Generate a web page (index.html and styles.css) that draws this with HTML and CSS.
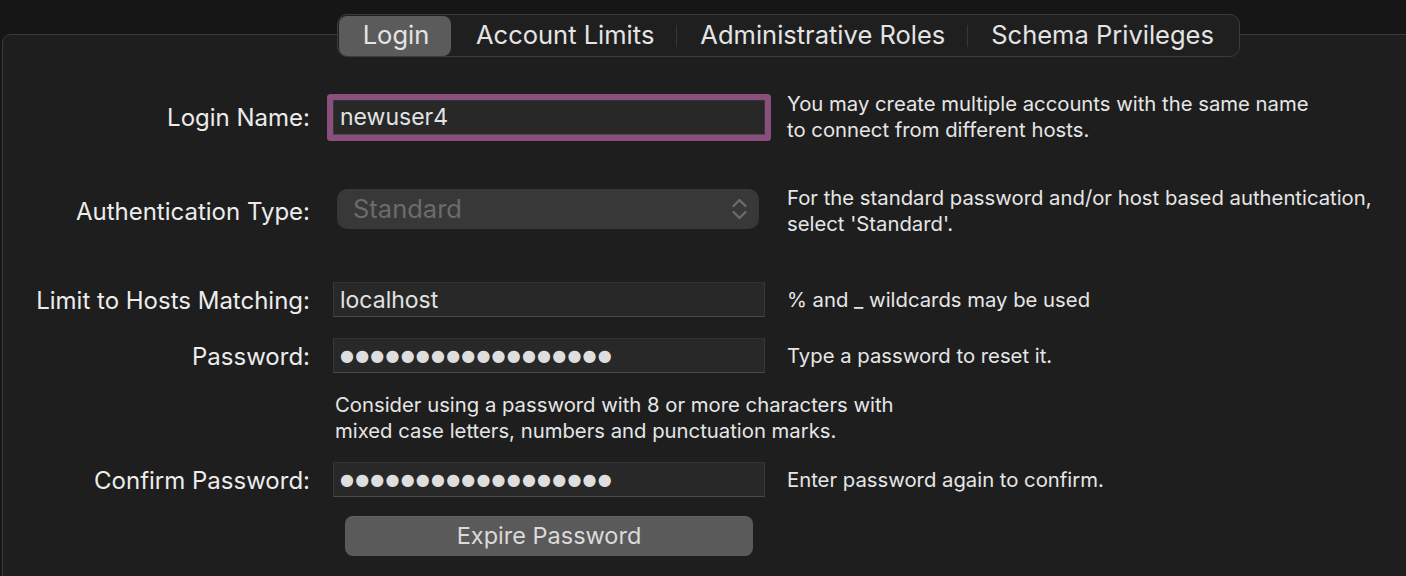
FILE: index.html
```html
<!DOCTYPE html>
<html>
<head>
<meta charset="utf-8">
<link rel="stylesheet" href="styles.css">
</head>
<body>
<div class="window">
  <div class="panel">
    <div class="tabs">
      <div class="tab selected">Login</div>
      <div class="tab">Account Limits</div>
      <div class="sep"></div>
      <div class="tab">Administrative Roles</div>
      <div class="sep"></div>
      <div class="tab">Schema Privileges</div>
    </div>

    <div class="row row1">
      <div class="label">Login Name:</div>
      <div class="field focus"><span class="val">newuser4</span></div>
      <div class="desc">You may create multiple accounts with the same name<br>to connect from different hosts.</div>
    </div>

    <div class="row row2">
      <div class="label">Authentication Type:</div>
      <div class="popup">
        <span class="popup-text">Standard</span>
        <svg class="chev" width="17" height="26" viewBox="0 0 17 26"><path d="M2.5 10 L8.5 4 L14.5 10 M2.5 16 L8.5 22 L14.5 16" fill="none" stroke="#6a6a6a" stroke-width="2.4" stroke-linecap="round" stroke-linejoin="round"/></svg>
      </div>
      <div class="desc">For the standard password and/or host based authentication,<br>select 'Standard'.</div>
    </div>

    <div class="row row3">
      <div class="label">Limit to Hosts Matching:</div>
      <div class="field"><span class="val">localhost</span></div>
      <div class="desc">% and _ wildcards may be used</div>
    </div>

    <div class="row row4">
      <div class="label">Password:</div>
      <div class="field"><span class="dots">●●●●●●●●●●●●●●●●●●</span></div>
      <div class="desc">Type a password to reset it.</div>
    </div>

    <div class="row row5">
      <div class="label"></div>
      <div class="hint">Consider using a password with 8 or more characters with<br>mixed case letters, numbers and punctuation marks.</div>
    </div>

    <div class="row row6">
      <div class="label">Confirm Password:</div>
      <div class="field"><span class="dots">●●●●●●●●●●●●●●●●●●</span></div>
      <div class="desc">Enter password again to confirm.</div>
    </div>

    <div class="row row7">
      <div class="label"></div>
      <div class="button">Expire Password</div>
    </div>
  </div>
</div>
</body>
</html>
```

FILE: styles.css
```css
html, body {
  margin: 0;
  padding: 0;
  background: #161616;
  overflow: hidden;
  width: 1406px;
  height: 576px;
}
body {
  font-family: Inter, "Liberation Sans", sans-serif;
  color: #e6e6e6;
}
.window {
  padding-top: 34px;
}
.panel {
  margin-left: 2px;
  width: 1440px;
  height: 560px;
  background: #1e1e1e;
  border: 1px solid #3a3a3a;
  border-radius: 9px;
  box-sizing: border-box;
}
.tabs {
  margin-top: -21px;
  margin-left: 334px;
  width: 903px;
  height: 43px;
  box-sizing: border-box;
  border: 1px solid #3c3c3c;
  border-radius: 10px;
  background: #1f1f1f;
  display: flex;
  align-items: center;
  padding: 0 1px;
}
.tab {
  flex: none;
  white-space: nowrap;
  font-size: 25.5px;
  color: #e4e4e4;
  padding: 0 22px 0 23px;
  line-height: 39px;
  height: 41px;
  box-sizing: border-box;
}
.tab.selected {
  background: #5b5b5b;
  border-radius: 8px;
  width: 112px;
  height: 40px;
  line-height: 38px;
  text-align: center;
  padding: 0 0 0 2px;
  margin-right: 2px;
}
.sep {
  flex: none;
  width: 1px;
  height: 22px;
  background: #363636;
}
.row {
  display: flex;
  align-items: center;
}
.label {
  width: 307px;
  flex: none;
  text-align: right;
  font-size: 24px;
  color: #ececec;
  margin-right: 23px;
  white-space: nowrap;
  padding-top: 1px;
}
.field {
  width: 432px;
  height: 35px;
  flex: none;
  box-sizing: border-box;
  background: #282828;
  border-top: 1px solid #333;
  border-bottom: 1px solid #4a4a4a;
  border-left: 1px solid #383838;
  border-right: 1px solid #383838;
  display: flex;
  align-items: center;
  padding-left: 6px;
  font-size: 23px;
  color: #e2e2e2;
}
.field.focus {
  box-shadow: 0 0 0 6px #8a4f7c;
  border-radius: 1px;
}
.desc {
  margin-left: 22px;
  font-size: 20.3px;
  line-height: 26px;
  color: #e6e6e6;
  white-space: nowrap;
}
.row1 { margin-top: 34px; height: 52px; }
.row2 { margin-top: 42px; height: 52px; }
.row3 { margin-top: 45px; height: 35px; }
.row4 { margin-top: 21px; height: 35px; }
.row5 { margin-top: 19px; height: 52px; }
.row6 { margin-top: 18px; height: 35px; }
.row7 { margin-top: 19px; height: 40px; }

.popup {
  width: 422px;
  height: 40px;
  flex: none;
  margin-left: 4px;
  margin-right: 6px;
  margin-bottom: 4px;
  box-sizing: border-box;
  background: #383838;
  border-radius: 10px;
  display: flex;
  align-items: center;
  justify-content: space-between;
  padding: 0 11px 0 16px;
}
.popup-text {
  font-size: 25.5px;
  line-height: 36px;
  color: #6b6b6b;
}
.dots {
  font-family: "DejaVu Sans", sans-serif;
  font-size: 16px;
  letter-spacing: 1.2px;
  color: #dedede;
}
.hint {
  margin-left: 2px;
  font-size: 20.3px;
  line-height: 26px;
  color: #e6e6e6;
  white-space: nowrap;
}
.button {
  margin-left: 12px;
  width: 408px;
  height: 40px;
  box-sizing: border-box;
  background: #5a5a5a;
  border-radius: 8px;
  border-top: 1px solid #636363;
  text-align: center;
  line-height: 38px;
  font-size: 23.5px;
  color: #dadada;
}
```
